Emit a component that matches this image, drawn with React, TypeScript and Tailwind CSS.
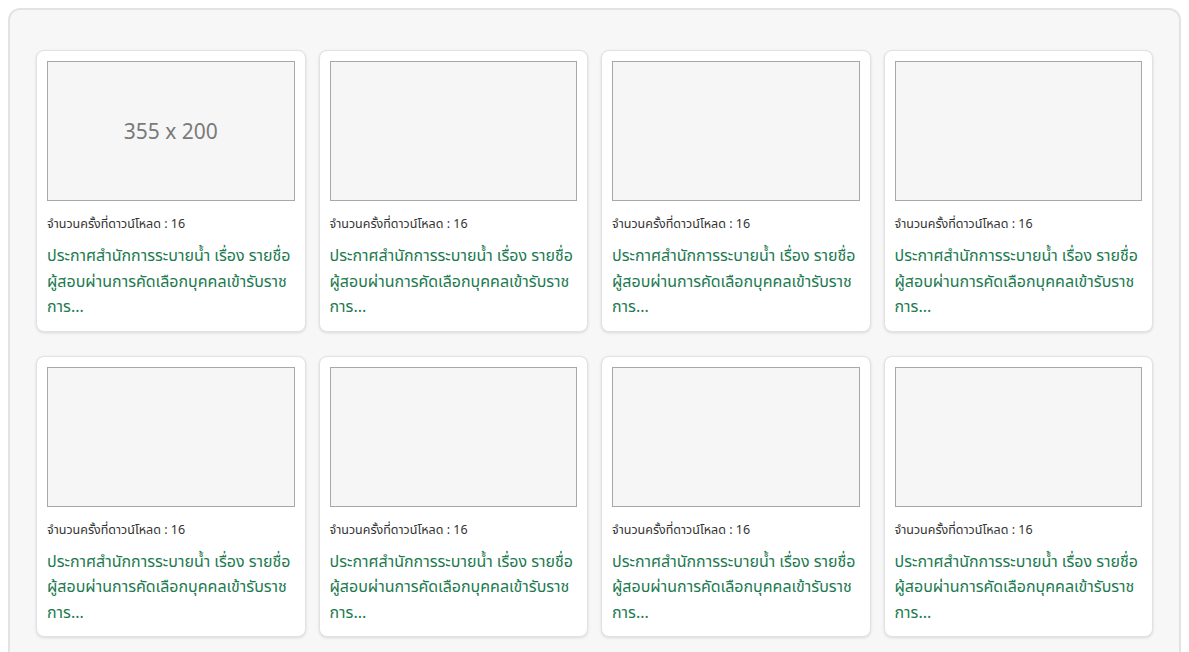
import React from 'react';

interface DocItem {
  id: number;
  downloads: number;
  title: string;
  showSize: boolean;
}

const items: DocItem[] = Array.from({ length: 8 }, (_, i) => ({
  id: i,
  downloads: 16,
  title: 'ประกาศสำนักการระบายน้ำ เรื่อง รายชื่อผู้สอบผ่านการคัดเลือกบุคคลเข้ารับราชการ...',
  showSize: i === 0,
}));

export default function App() {
  return (
    <div className="min-h-[652px] bg-white pt-2 px-2 font-['Noto_Sans','Noto_Sans_Thai','Liberation_Sans',sans-serif]">
      {/* Panel */}
      <div className="min-h-[660px] rounded-t-[12px] border-2 border-b-0 border-[#e3e3e3] bg-[#f7f7f7] px-[26px] pt-[40px]">
        <div className="grid grid-cols-4 gap-x-[13px] gap-y-[24px]">
          {items.map((item) => (
            <div
              key={item.id}
              className="flex flex-col rounded-[8px] border border-[#e2e2e2] bg-white px-[10px] pt-[10px] pb-[11px] shadow-[0_1px_3px_rgba(0,0,0,0.12)]"
            >
              <div className="flex h-[140px] items-center justify-center border border-[#a8a8a8] bg-[#f6f6f6]">
                {item.showSize && (
                  <span className="mt-[2px] text-[21px] text-[#7a7a7a]">355 x 200</span>
                )}
              </div>
              <p className="mt-[14px] text-[12.5px] leading-[18px] text-[#333]">
                จำนวนครั้งที่ดาวน์โหลด : {item.downloads}
              </p>
              <p className="mt-[10px] break-all text-[16px] leading-[25.5px] text-[#1c7a4f]">
                {item.title}
              </p>
            </div>
          ))}
        </div>
      </div>
    </div>
  );
}
